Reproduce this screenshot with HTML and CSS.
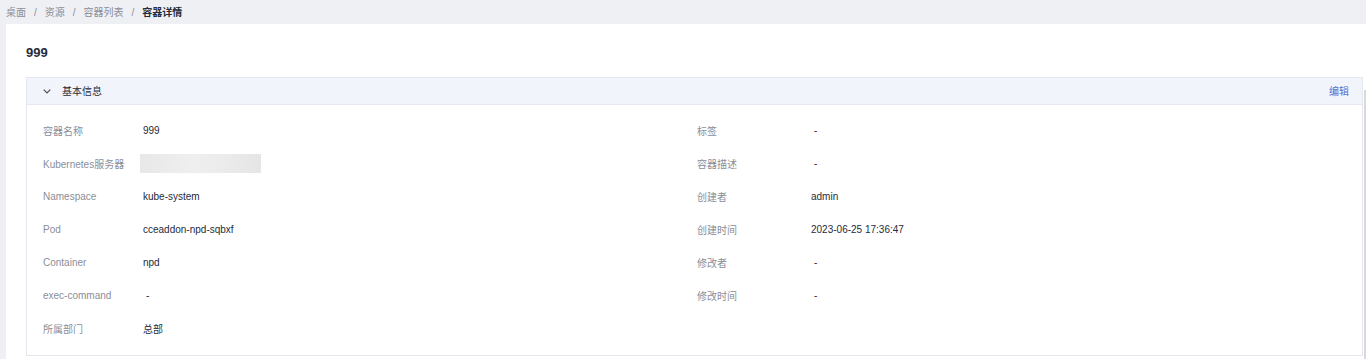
FILE: index.html
```html
<!DOCTYPE html>
<html lang="zh-CN">
<head>
<meta charset="utf-8">
<title>容器详情</title>
<link rel="stylesheet" href="styles.css">
</head>
<body>
<nav class="crumbs">
  <span class="crumb">桌面</span><span class="sep">/</span>
  <span class="crumb">资源</span><span class="sep">/</span>
  <span class="crumb">容器列表</span><span class="sep">/</span>
  <span class="crumb current">容器详情</span>
</nav>
<main class="panel">
  <h1 class="title">999</h1>
  <section class="card">
    <header class="card-head">
      <div class="head-left">
        <svg class="chev" width="8" height="5" viewBox="0 0 8 5"><path d="M0.7 0.7 L4 4 L7.3 0.7" fill="none" stroke="#4a4f5c" stroke-width="1.2"/></svg>
        <span class="head-title">基本信息</span>
      </div>
      <a class="edit">编辑</a>
    </header>
    <div class="card-body">
      <div class="col col-left">
        <div class="row"><span class="label">容器名称</span><span class="value">999</span></div>
        <div class="row"><span class="label">Kubernetes服务器</span><span class="value"><span class="blur"></span></span></div>
        <div class="row"><span class="label">Namespace</span><span class="value">kube-system</span></div>
        <div class="row"><span class="label">Pod</span><span class="value">cceaddon-npd-sqbxf</span></div>
        <div class="row"><span class="label">Container</span><span class="value">npd</span></div>
        <div class="row"><span class="label">exec-command</span><span class="value dash">-</span></div>
        <div class="row"><span class="label">所属部门</span><span class="value">总部</span></div>
      </div>
      <div class="col col-right">
        <div class="row"><span class="label">标签</span><span class="value dash">-</span></div>
        <div class="row"><span class="label">容器描述</span><span class="value dash">-</span></div>
        <div class="row"><span class="label">创建者</span><span class="value">admin</span></div>
        <div class="row"><span class="label">创建时间</span><span class="value">2023-06-25 17:36:47</span></div>
        <div class="row"><span class="label">修改者</span><span class="value dash">-</span></div>
        <div class="row"><span class="label">修改时间</span><span class="value dash">-</span></div>
      </div>
    </div>
  </section>
  <div class="scrollbar"></div>
</main>
</body>
</html>
```
FILE: styles.css
```css
* { box-sizing: border-box; }
html, body { margin: 0; padding: 0; }
body {
  background: #eff0f4;
  font-family: "Liberation Sans", Arial, "Noto Sans CJK SC", sans-serif;
  color: #252b3a;
  font-size: 10px;
  height: 359px;
  overflow: hidden;
}
.crumbs {
  height: 24px;
  padding: 0 0 0 6px;
  display: flex;
  align-items: center;
  line-height: 14px;
  padding-top: 1px;
  color: #8a8e99;
  font-size: 10px;
}
.sep { margin: 0 8px; }
.crumb.current { color: #252b3a; font-weight: bold; }
.panel {
  position: relative;
  margin-left: 6px;
  background: #fff;
  padding: 21px 3px 0 20px;
  height: 335px;
}
.title {
  margin: 0;
  font-size: 13px;
  line-height: 16px;
  font-weight: bold;
  color: #252b3a;
}
.card {
  margin-top: 16px;
  border: 1px solid #e4e7ee;
  height: 279px;
}
.card-head {
  height: 27px;
  background: #f2f4fb;
  border-bottom: 1px solid #e6e9f1;
  display: flex;
  align-items: center;
  justify-content: space-between;
  padding: 0 13px 1px 16px;
}
.head-left { display: flex; align-items: center; }
.chev { margin-right: 11px; margin-top: 1px; }
.head-title { color: #252b3a; }
.edit { color: #526ecc; cursor: pointer; }
.card-body {
  display: flex;
  padding: 9px 0 0 16px;
}
.col-left { width: 654px; }
.col-right { flex: 1; }
.row {
  height: 33px;
  display: flex;
  align-items: center;
}
.label { color: #8a8e99; flex: 0 0 auto; }
.col-left .label { width: 100px; }
.col-right .label { width: 114px; }
.value { color: #252b3a; display: flex; align-items: center; }
.dash { padding-left: 3px; }
.blur {
  display: block;
  width: 121px;
  height: 19px;
  margin-left: -3px;
  background: linear-gradient(90deg, #e8e8e8 0%, #efefef 45%, #ebebeb 70%, #e5e5e5 100%);
}
.scrollbar {
  position: absolute;
  right: 0;
  top: 66px;
  bottom: 0;
  width: 2px;
  background: #d8d9dc;
}
```
